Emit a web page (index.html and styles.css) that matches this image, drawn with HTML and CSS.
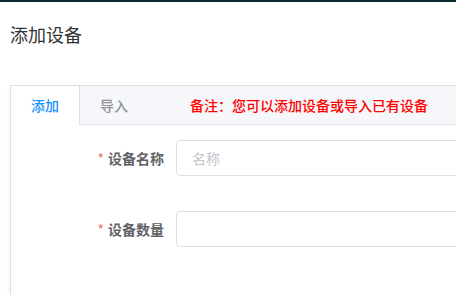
FILE: index.html
```html
<!DOCTYPE html>
<html lang="zh-CN">
<head>
  <meta charset="UTF-8" />
  <meta name="viewport" content="width=device-width, initial-scale=1.0" />
  <title>添加设备</title>
  <link rel="stylesheet" href="styles.css">
</head>
<body>
  <div class="top-bar"></div>
  <div class="page">
    <h3 class="page-title">添加设备</h3>

    <div class="tabs-card">
      <div class="tabs-header">
        <div class="tab-item active">添加</div>
        <div class="tab-item">导入</div>
        <span class="tab-note">备注：您可以添加设备或导入已有设备</span>
      </div>

      <div class="tabs-content">
        <div class="form-item">
          <label class="form-label"><span class="required">*</span>设备名称</label>
          <input type="text" class="form-input" placeholder="名称" />
        </div>
        <div class="form-item">
          <label class="form-label"><span class="required">*</span>设备数量</label>
          <input type="text" class="form-input" />
        </div>
      </div>
    </div>
  </div>
</body>
</html>
```

FILE: styles.css
```css
body {
  font-family: "Noto Sans CJK SC", "Noto Sans", sans-serif;
  background-color: #ffffff;
  margin: 0;
  padding: 0;
  overflow: hidden;
}
.top-bar {
  height: 2px;
  background-color: #0d2a33;
}
.page {
  padding: 0 10px;
}
.page-title {
  margin: 0;
  padding-top: 20px;
  height: 63px;
  line-height: 24px;
  font-size: 18px;
  font-weight: 400;
  color: #303133;
}
.tabs-card {
  width: 640px;
  height: 260px;
  border: 1px solid #dcdfe6;
  background-color: #ffffff;
  box-shadow: 0 2px 4px rgba(0, 0, 0, 0.08);
}
.tabs-header {
  display: flex;
  align-items: center;
  height: 38px;
  background-color: #f5f7fa;
  border-bottom: 1px solid #e4e7ed;
}
.tab-item {
  height: 38px;
  line-height: 38px;
  padding: 0 20px;
  font-size: 14px;
  font-weight: 500;
  color: #909399;
  border-right: 1px solid transparent;
}
.tab-item.active {
  color: #1890ff;
  background-color: #ffffff;
  height: 39px;
  margin-bottom: -1px;
  border-right-color: #dcdfe6;
}
.tab-note {
  margin-left: 41px;
  font-size: 14px;
  font-weight: 500;
  color: #ff0000;
}
.tabs-content {
  padding: 15px;
}
.form-item {
  display: flex;
  margin-bottom: 35px;
}
.form-label {
  width: 150px;
  box-sizing: border-box;
  padding-right: 12px;
  text-align: right;
  line-height: 36px;
  font-size: 14px;
  font-weight: 700;
  color: #606266;
}
.required {
  color: #f56c6c;
  margin-right: 4px;
  font-weight: 400;
}
.form-input {
  width: 400px;
  height: 36px;
  box-sizing: border-box;
  padding: 0 15px;
  border: 1px solid #dcdfe6;
  border-radius: 4px;
  font-family: inherit;
  font-size: 14px;
  color: #606266;
  outline: none;
}
.form-input::placeholder {
  color: #c0c4cc;
}
```
